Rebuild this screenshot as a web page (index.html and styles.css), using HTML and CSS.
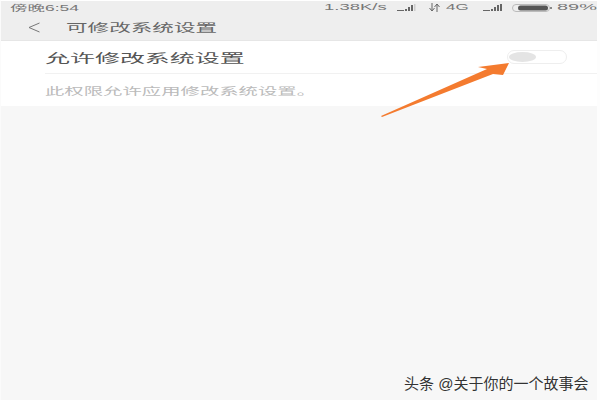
FILE: index.html
```html
<!DOCTYPE html>
<html>
<head>
    <title>可修改系统设置</title>
    <link rel="stylesheet" href="styles.css">
</head>
<body>
    <div class="screen">
        <div class="top">
            <div class="status">
                <span class="time">傍晚6:54</span>
                <div class="status-right">
                    <span class="speed">1.38K/s</span>
                    <svg class="signal" width="20" height="7" viewBox="0 0 20 7"><path d="M0 6h7v1H0zM8 5h2v2H8zM11 3h2v4h-2zM14 1h2v6h-2z" fill="#666"/><path d="M17 0h1.500v7H17z" fill="#ccc"/></svg>
                    <svg class="updown" width="11" height="9" viewBox="0 0 11 9"><path d="M3 0v8M0.500 5L3 8l2.500-3M8 9V1M5.500 4L8 1l2.500 3" stroke="#666" fill="none"/></svg>
                    <span class="net">4G</span>
                    <svg class="signal signal-b" width="20" height="7" viewBox="0 0 20 7"><path d="M0 6h7v1H0zM8 5h2v2H8zM11 3h2v4h-2zM14 1h2v6h-2zM17 0h2v7h-2z" fill="#666"/></svg>
                    <svg class="battery" width="40" height="8" viewBox="0 0 40 8"><rect x="0.500" y="0.500" width="37" height="7" rx="3.500" fill="none" stroke="#bbb"/><rect x="6" y="1.500" width="30" height="5" rx="2.500" fill="#555"/><rect x="38" y="3" width="2" height="2" fill="#888"/></svg>
                    <span class="percent">89%</span>
                </div>
            </div>
            <div class="titlebar">
                <svg class="back" width="12" height="11" viewBox="0 0 12 11"><path d="M11.500 1L1 5.500 11.500 10" fill="none" stroke="#777" stroke-width="1"/></svg>
                <span class="title">可修改系统设置</span>
            </div>
        </div>

        <div class="panel">
            <div class="row">
                <span class="row-label">允许修改系统设置</span>
                <div class="toggle"><div class="knob"></div></div>
            </div>
            <div class="desc"><span class="desc-text">此权限允许应用修改系统设置。</span></div>
        </div>

        <svg class="arrow" width="140" height="70" viewBox="0 0 140 70"><path d="M1 64L107 17 98 15 129 11 123 23 113 22 2 65z" fill="#f47b2f"/></svg>
        <span class="watermark">头条 @关于你的一个故事会</span>
    </div>
</body>
</html>
```

FILE: styles.css
```css
html, body { margin: 0; padding: 0; }
body { font-family: "Liberation Sans", "Noto Sans CJK SC", sans-serif; background-color: #fff; }
.screen { position: relative; width: 600px; height: 400px; overflow: hidden; box-sizing: border-box; background-color: #f7f7f7; border-top: 1px solid #fff; border-left: 1px solid #fbfbfb; border-right: 3px solid #fdfdfd; }

/* the shot is stretched sideways, so the text is too */
.time, .speed, .net, .percent, .title, .row-label, .desc-text { display: inline-block; transform-origin: left center; white-space: nowrap; }

.top { height: 40px; background-color: #eeeeee; border-bottom: 1px solid #e6e6e6; box-sizing: border-box; }
.status { display: flex; justify-content: space-between; align-items: center; height: 13px; padding: 0 0 0 9px; font-size: 10px; color: #777; }
.time { transform: scale(1.75, 0.85); }
.status-right { display: flex; align-items: center; width: 273px; }
.speed { width: 62px; margin-right: 11px; transform: scale(1.85, 0.85); }
.signal { margin-right: 12px; }
.updown { margin-right: 6px; }
.net { width: 24px; margin-right: 13px; transform: scale(1.7, 0.85); }
.signal-b { margin-right: 9px; }
.battery { margin-right: 5px; }
.percent { transform: scale(2, 0.85); }

.titlebar { display: flex; align-items: center; height: 26px; padding-left: 27px; }
.back { flex-shrink: 0; }
.title { margin-left: 26px; font-size: 13px; color: #666; transform: scale(1.66, 0.9); }

.panel { background-color: #fff; height: 65px; padding-left: 44px; }
.row { display: flex; justify-content: space-between; align-items: center; height: 32px; border-bottom: 1px solid #f1f1f1; padding-right: 30px; }
.row-label { font-size: 13px; color: #555; transform: scale(1.92, 0.95); }
.toggle { display: flex; align-items: center; width: 60px; height: 14px; box-sizing: border-box; border: 1px solid #eee; border-radius: 7px; background-color: #fff; padding-left: 1px; }
.knob { width: 27px; height: 10px; border-radius: 50%; background-color: #e4e4e4; }
.desc { display: flex; align-items: center; height: 32px; }
.desc-text { font-size: 11px; color: #bbb; transform: scale(1.76, 0.9); }

.arrow { position: absolute; left: 379px; top: 51px; }
.watermark { position: absolute; left: 403px; top: 371px; font-size: 15px; color: #333; text-shadow: 0 0 2px #fff; white-space: nowrap; }
```
